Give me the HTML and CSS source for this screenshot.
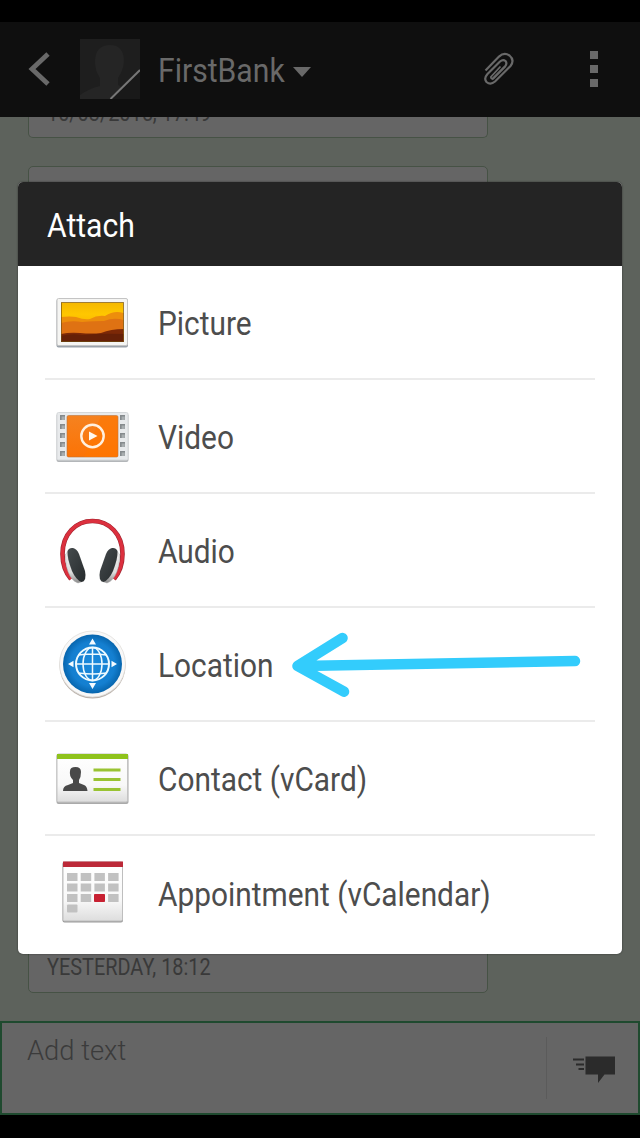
FILE: index.html
```html
<!DOCTYPE html>
<html lang="en">
<head>
<meta charset="utf-8">
<title>FirstBank</title>
<link rel="stylesheet" href="styles.css">
</head>
<body>
<div class="screen">
  <div class="status"></div>
  <header class="bar">
    <svg class="back" width="24" height="36" viewBox="0 0 24 36"><path d="M20 3 4 18 20 33" fill="none" stroke="#696969" stroke-width="4.800"/></svg>
    <svg class="avatar" width="60" height="60" viewBox="0 0 60 60"><rect width="60" height="60" fill="#1e1e1e"/><path d="M0 60V56Q10 49 20 47V39Q15 32 15 23Q15 6 30 6Q44 6 44 23Q43 32 38 39V46L45 50 35 60Z" fill="#252525"/><path d="M30 60 60 30V60Z" fill="#191919"/><path d="M30.500 60 60 31" stroke="#777" stroke-width="2"/></svg>
    <h1 class="title"><span class="cond">FirstBank</span></h1>
    <svg class="caret" width="18" height="10" viewBox="0 0 18 10"><path d="M0 0H18L9 10Z" fill="#696969"/></svg>
    <svg class="clip" width="32" height="36" viewBox="0 0 32 36"><path d="M2.500 19.500 16 5.600Q21 1 26.500 4.500Q32 9 27.500 15L12 30.500Q7.500 34.500 3.500 31Q.5 27.500 4.500 23L17 10.500Q20 8 22.500 10Q24.500 12.500 22 15.500L9 28.500" fill="none" stroke="#696969" stroke-width="2.200"/><path d="M22 15.500 10.500 27.200Q8 28.500 7.800 26L17.500 15.500" fill="none" stroke="#696969" stroke-width="1.800"/></svg>
    <div class="dots"><i></i><i></i><i></i></div>
  </header>
  <main class="thread">
    <div class="bubble first"><span class="cond stamp">10/03/2015, 17:49</span></div>
    <div class="bubble second"><span class="cond stamp">YESTERDAY, 18:12</span></div>
  </main>
  <footer class="composer">
    <span class="hint">Add text</span>
    <div class="send">
      <svg width="43" height="28" viewBox="0 0 43 28"><path d="M12.500 0.500H42V18.500H31.500L25 27V18.500H12.500Z" fill="#2b2b2b"/><path d="M0 3.500H11M3 8.500H11M5.500 13H11" stroke="#2b2b2b" stroke-width="2.200"/></svg>
    </div>
  </footer>
  <div class="nav"></div>

  <section class="dialog">
    <h2 class="dialog-head"><span class="cond">Attach</span></h2>
    <ul class="list">
      <li>
        <svg class="ico" width="76" height="76" viewBox="0 0 76 76">
          <defs>
            <linearGradient id="sky" x2="0" y2="1"><stop stop-color="#f5b800"/><stop offset=".3" stop-color="#ffc700"/><stop offset="1" stop-color="#f29a00"/></linearGradient>
            <linearGradient id="paper" x2="0" y2="1"><stop stop-color="#fff"/><stop offset=".65" stop-color="#f8f8f8"/><stop offset="1" stop-color="#ddd"/></linearGradient>
            <linearGradient id="orange" x2="0" y2="1"><stop stop-color="#f58220"/><stop offset="1" stop-color="#fc7305"/></linearGradient>
            <linearGradient id="cup" x2="1" y2="1"><stop stop-color="#454b4d"/><stop offset="1" stop-color="#262b2d"/></linearGradient>
            <linearGradient id="shell" x2="0" y2="1"><stop stop-color="#eee"/><stop offset=".7" stop-color="#ddd"/><stop offset="1" stop-color="#888"/></linearGradient>
            <radialGradient id="blue"><stop stop-color="#1989dc"/><stop offset=".75" stop-color="#147fd0"/><stop offset="1" stop-color="#0765ad"/></radialGradient>
          </defs>
          <rect x="2.500" y="15" width="71.500" height="48.500" rx="2" fill="#9ba2aa"/>
          <rect x="3" y="14.500" width="70.500" height="47" rx="1.500" fill="#f5f5f3" stroke="#c4c4c4"/>
          <rect x="7" y="18.500" width="62.500" height="39.500" fill="url(#sky)"/>
          <path d="M7 33Q16 32 22 33 30 36 36 35 43 31 51 32 60 26 69.500 29V58H7Z" fill="#ed8e0c"/>
          <path d="M7 39Q17 36 28 38 42 37 50 37 60 33 69.500 36V58H7Z" fill="#df7213"/>
          <path d="M7 50Q16 48 26 49 38 50 47 49 57 45 69.500 45V58H7Z" fill="#7c2807"/>
          <path d="M7 52Q18 49 28 51 49 49 69.500 50V58H7Z" fill="#662007"/>
          <rect x="7.500" y="18.500" width="62" height="39" fill="none" stroke="#704d10" stroke-opacity=".65"/>
        </svg>
        <span class="cond">Picture</span>
      </li>
      <li>
        <svg class="ico" width="76" height="76" viewBox="0 0 76 76">
          <g transform="translate(0 1)">
          <rect x="2.500" y="14.500" width="72" height="48.500" rx="2" fill="#b3b6b9"/>
          <rect x="3" y="13.500" width="71" height="47.500" rx="1.500" fill="#e8eaec" stroke="#d5d8da"/>
          <rect x="13" y="16.500" width="51" height="41.500" rx="1.500" fill="url(#orange)" stroke="#bd7337" stroke-width=".6"/>
          <path d="M47 17H63.500V58H30Z" fill="#ff7600" opacity=".6"/>
          <path d="M8.500 16V59M68.500 16V59" stroke="#858a8d" stroke-width="5" stroke-dasharray="5 4"/>
          <path d="M9.200 17.500V59M69.200 17.500V59" stroke="#a8adaf" stroke-width="3.200" stroke-dasharray="3.500 5.500"/>
          <circle cx="38.500" cy="37" r="11.200" fill="none" stroke="#fff0df" stroke-width="2.400"/>
          <path d="M35 32.500 43.500 37 35 41.500Z" fill="#fff8ee"/>
          </g>
        </svg>
        <span class="cond">Video</span>
      </li>
      <li>
        <svg class="ico" width="76" height="76" viewBox="0 0 76 76">
          <path d="M17 67Q8.500 57 8.500 42C8.500 22 22 9 38.500 9S68.500 22 68.500 42Q68.500 57 60 67" fill="none" stroke="#9e2631" stroke-width="4.600"/>
          <path d="M17 67Q8.500 57 8.500 42C8.500 22 22 9 38.500 9S68.500 22 68.500 42Q68.500 57 60 67" fill="none" stroke="#dc303e" stroke-width="3.300"/>
          <path d="M11.500 42C11 54 15 68 24 71L30 69 18 36ZM65.500 42C66 54 62 68 53 71L47 69 59 36Z" fill="url(#shell)" stroke="#aaa" stroke-width=".5"/>
          <path d="M13.500 39Q15 35.500 19 36 23 37 25 42L31 59Q33 69 27.500 70 22 68 18 59 13 46 13.500 39Z" fill="url(#cup)"/>
          <path d="M63.500 39Q62 35.500 58 36 54 37 52 42L46 59Q44 69 49.500 70 55 68 59 59 64 46 63.500 39Z" fill="url(#cup)"/>
        </svg>
        <span class="cond">Audio</span>
      </li>
      <li>
        <svg class="ico" width="76" height="76" viewBox="0 0 76 76">
          <circle cx="38.500" cy="39.500" r="33" fill="#b9b0a9"/>
          <circle cx="38.500" cy="38" r="33" fill="#f8f8f8" stroke="#e1dedb" stroke-width=".8"/>
          <circle cx="38.500" cy="38" r="29.500" fill="url(#blue)"/>
          <g transform="translate(.5)">
          <g fill="none" stroke="#eefaff" stroke-width="1.500"><circle cx="38" cy="38" r="16.500" stroke-width="2"/><ellipse cx="38" cy="38" rx="9.500" ry="16.500"/><path d="M38 21.500V54.500M21.500 38H54.500M24 29Q38 27 52 29M24 47Q38 49 52 47"/></g>
          <path d="M38 12.500 41.500 18.500H34.500ZM38 63 41.500 57H34.500ZM13.500 38 19 34.700V41.300ZM62.500 38 57 34.700V41.300Z" fill="#f5fbff"/>
          </g>
        </svg>
        <span class="cond">Location</span>
      </li>
      <li>
        <svg class="ico" width="76" height="76" viewBox="0 0 76 76">
          <rect x="2.500" y="14" width="72" height="50" rx="2" fill="#aaa"/>
          <rect x="3" y="14" width="70.500" height="48" rx="1.500" fill="url(#paper)" stroke="#c3c3c3"/>
          <path d="M3 14H74V19H3Z" fill="#8fc31c"/>
          <path d="M9 51Q9 46 14 45L19 43V40Q15 36 16 31 16 27 21.500 27 27 27 27 32 27 37 25 40V43L30 45Q33 46 33.500 51Z" fill="#494949"/>
          <path d="M39.500 30H66.500M39.500 39.500H66.500M39.500 49.500H66.500" stroke="#99c333" stroke-width="2.800"/>
        </svg>
        <span class="cond">Contact (vCard)</span>
      </li>
      <li>
        <svg class="ico" width="76" height="76" viewBox="0 0 76 76">
          <g transform="translate(0 -1)">
          <rect x="8.500" y="8" width="60.500" height="60.500" rx="2" fill="#999"/>
          <rect x="9" y="8" width="59.500" height="59" rx="1.500" fill="url(#paper)" stroke="#bebebe"/>
          <path d="M9 7.500H69V13H9Z" fill="#bc2938"/>
          <path d="M13 23H67M13 33.500H67M13 44H67" stroke="#c1c1c1" stroke-width="8" stroke-dasharray="10.500 3.200"/>
          <rect x="13" y="50.500" width="10.500" height="8" rx="1" fill="#c1c1c1"/>
          <rect x="40" y="40" width="11" height="8" rx="1" fill="#c82132"/>
          </g>
        </svg>
        <span class="cond">Appointment (vCalendar)</span>
      </li>
    </ul>
  </section>
  <svg class="arrow" width="296" height="70" viewBox="0 0 296 70"><path d="M54.500 8 9.500 36 56 61.700M13 36 287 31" fill="none" stroke="#33ccfc" stroke-width="10.500" stroke-linecap="round" stroke-linejoin="round"/></svg>
</div>
</body>
</html>
```
FILE: styles.css
```css
* { box-sizing: border-box; }
body { margin: 0; background: #000; font-family: Roboto, "Liberation Sans", sans-serif; }
.screen { position: relative; width: 640px; height: 1138px; overflow: hidden; display: flex; flex-direction: column; }
.status { height: 22px; flex: none; background: #000; }
.cond { display: inline-block; transform: scaleX(.878); transform-origin: 0 50%; white-space: nowrap; }

.bar { height: 95px; flex: none; display: flex; align-items: center; background: #0f0f0f; padding: 0 42px 2px 28px; color: #696969; }
.back { margin-right: 28px; }
.avatar { margin-right: 18px; }
.title { width: 135px; margin: 0; font-size: 34px; font-weight: 400; line-height: 40px; padding-top: 3px; }
.title .cond, .dialog-head .cond { transform: scaleX(.886); }
.caret { margin-top: 6px; }
.clip { margin-left: 172px; }
.dots { margin-left: auto; display: grid; gap: 6px; }
.dots i { width: 8.500px; height: 8px; background: #696969; }

.thread { height: 904px; flex: none; background: #5d625c; padding-left: 28px; display: flex; flex-direction: column; }
.bubble { width: 460px; border: 1px solid #465245; border-radius: 5px; background: #656565; display: flex; align-items: flex-end; padding-left: 18px; }
.stamp { font-size: 23px; line-height: 28px; color: #393939; transform: scaleX(.865); }
.first { height: 21px; border-top: 0; border-radius: 0 0 5px 5px; overflow: hidden; padding-bottom: 9px; }
.second { margin-top: 28px; height: 827px; padding-bottom: 10px; }

.composer { height: 94px; flex: none; background: #656565; border: 2px solid #1f4a2f; display: flex; align-items: center; }
.hint { align-self: flex-start; margin: 11px 0 0 25px; font-size: 28.500px; line-height: 34px; font-weight: 300; color: #3b3b3b; flex: 1; transform: scaleX(.96); transform-origin: 0 50%; }
.send { width: 92px; height: 62px; border-left: 1px solid #5b5b5b; display: flex; align-items: center; padding: 3px 0 0 26px; }
.nav { flex: 1; background: #000; }

.dialog { position: absolute; left: 18px; top: 182px; width: 604px; height: 772px; border-radius: 5px; background: #fff; overflow: hidden; box-shadow: 0 0 2px rgba(0,0,0,.5); }
.dialog-head { margin: 0; height: 84px; padding: 3px 0 0 29px; background: #242424; color: #fff; font-size: 34px; line-height: 80px; font-weight: 400; }
.list { margin: 0; padding: 0 27px; list-style: none; }
.list li { height: 114px; border-bottom: 2px solid #ebebeb; display: flex; align-items: center; gap: 28px; padding-left: 9px; color: #4d4d4d; font-size: 34px; line-height: 40px; }
.list li:last-child { border-bottom: 0; }
.list .cond { padding-top: 2px; }
.arrow { position: absolute; left: 288px; top: 630px; }
```
